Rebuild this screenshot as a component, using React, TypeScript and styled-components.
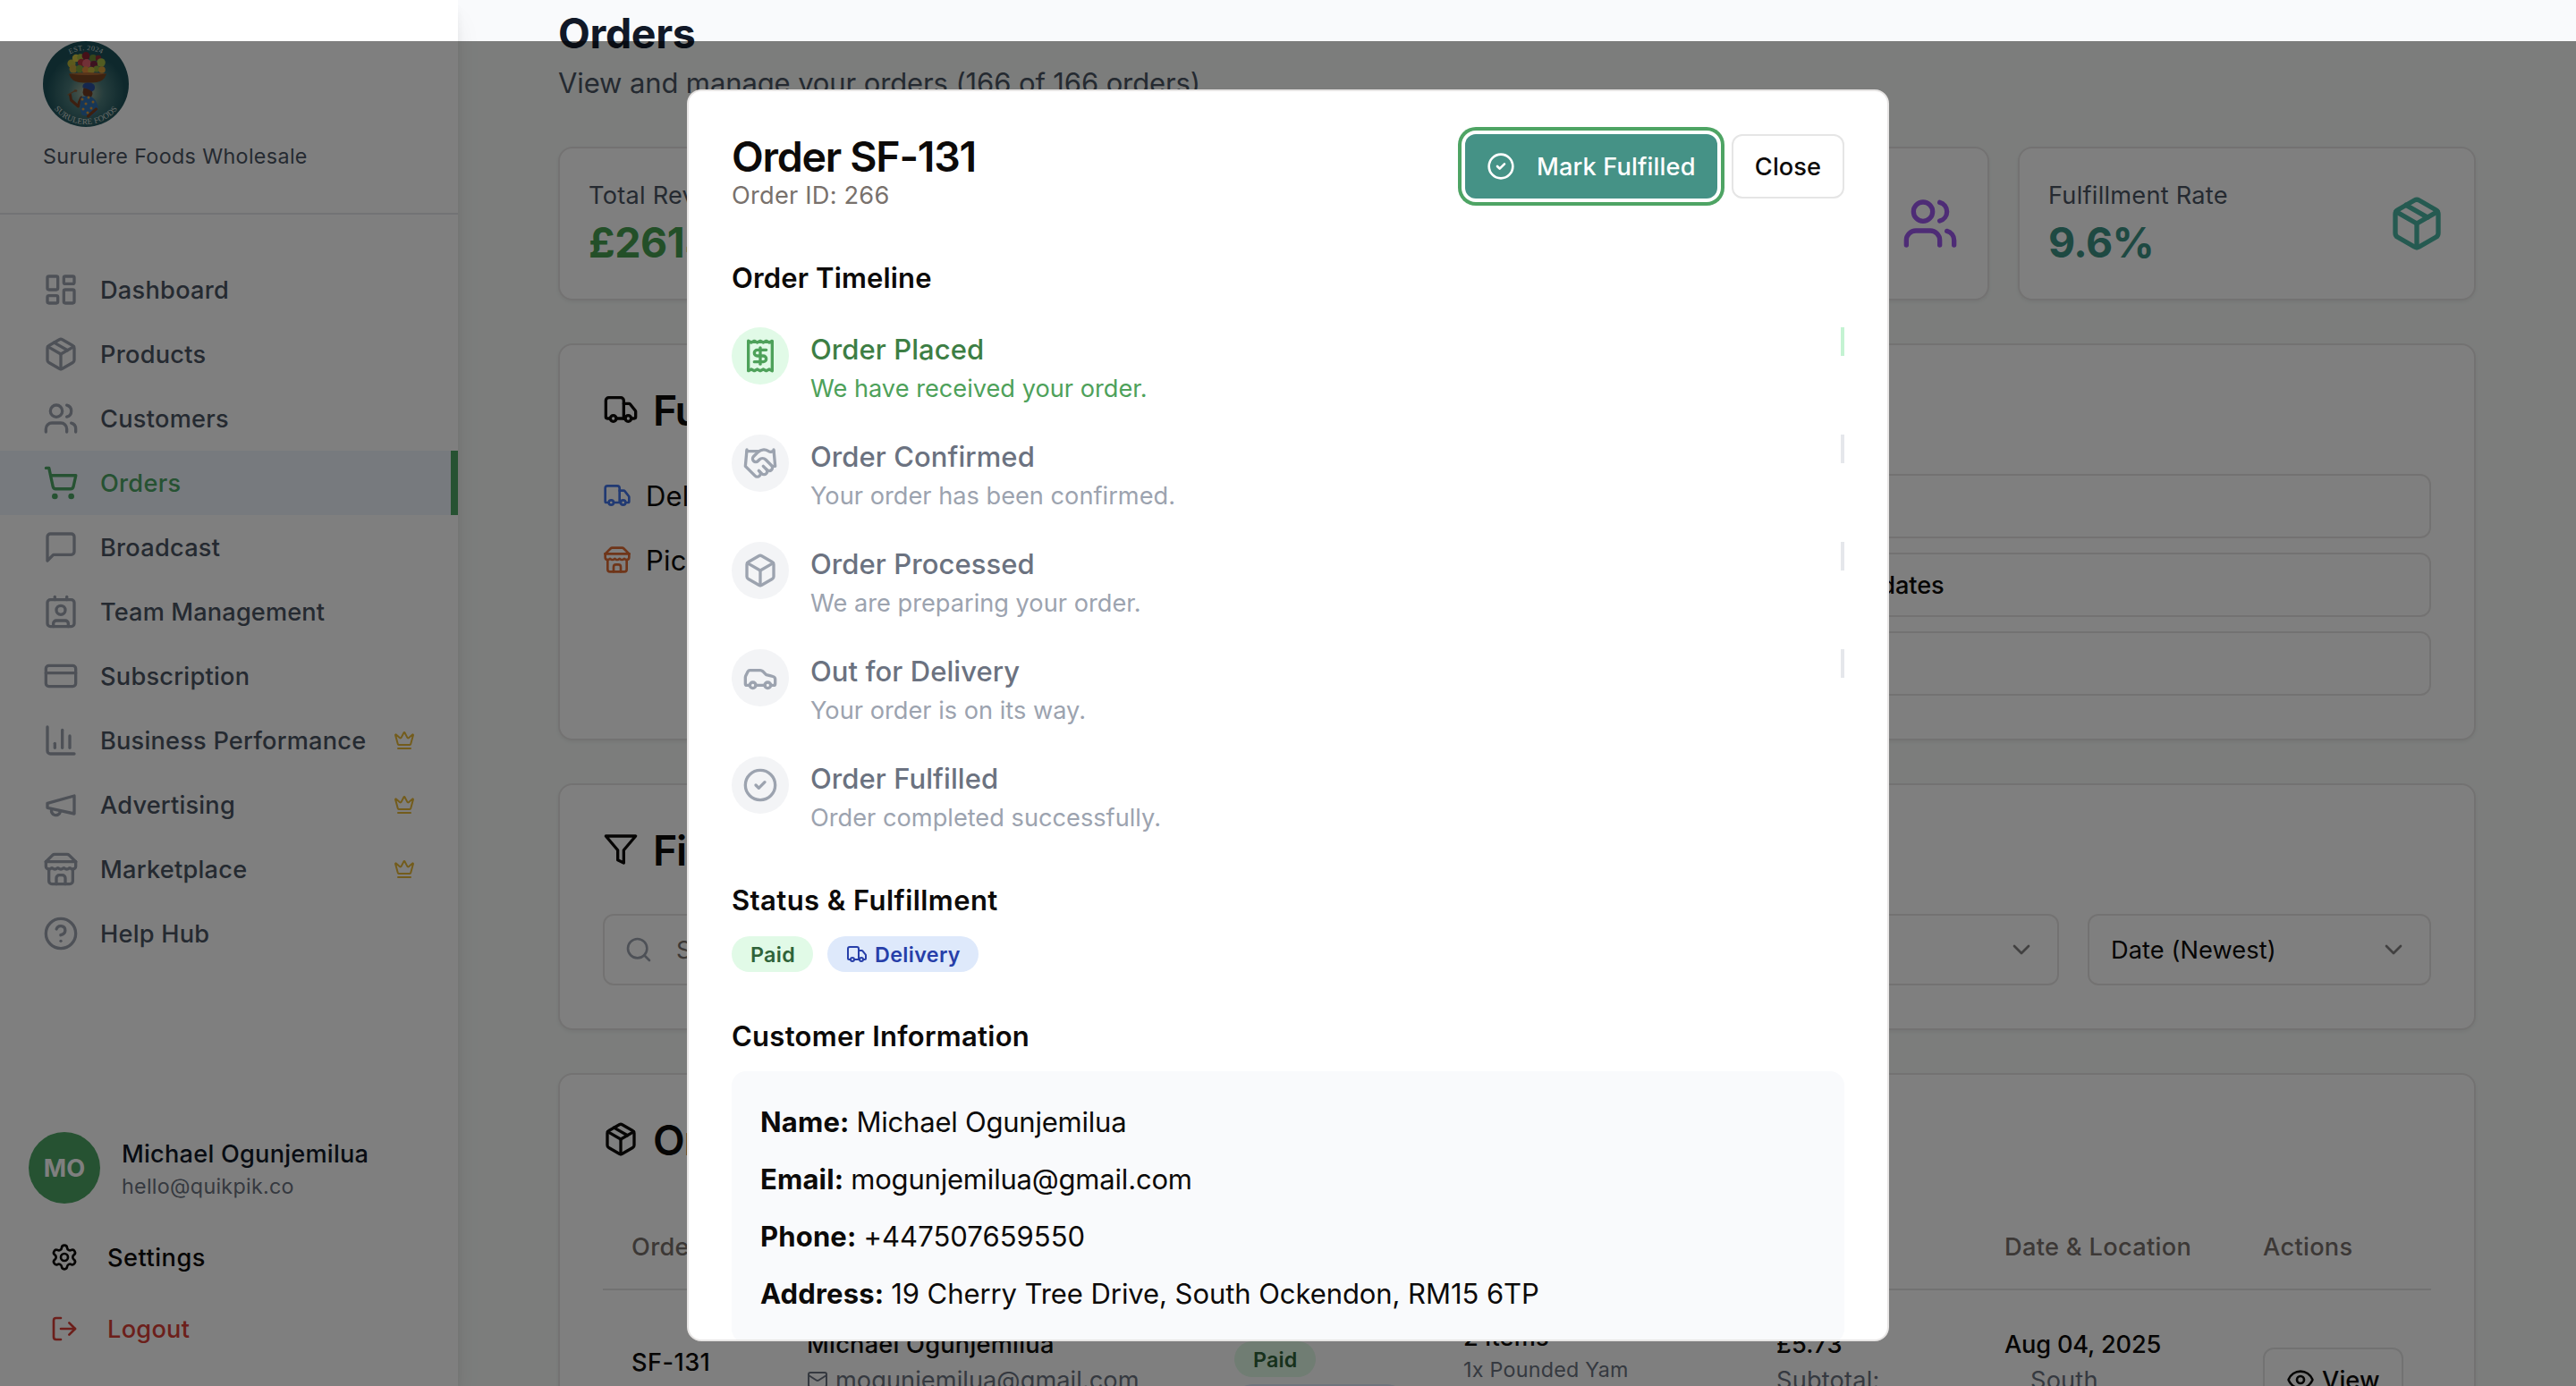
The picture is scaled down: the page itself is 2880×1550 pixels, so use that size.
import React from 'react';
import styled, { createGlobalStyle, css } from 'styled-components';
import {
  Box as BoxIcon, Car, ChartColumn, ChevronDown, CircleCheck, Contact, CreditCard, Crown, Eye,
  Handshake, LayoutDashboard, LogOut, Mail, Package, Receipt, Settings, ShoppingCart, Truck, Users,
} from 'lucide-react';

const GlobalStyle = createGlobalStyle`
  *, *::before, *::after { box-sizing: border-box; }
  html, body { margin: 0; padding: 0; }
  body {
    font-family: Inter, "Liberation Sans", sans-serif;
    color: #0c0a09;
    overflow: hidden;
    -webkit-font-smoothing: antialiased;
  }
  svg { display: block; flex: none; }
  button { font: inherit; color: inherit; }
`;

/* Type scale: optical size and line height for each step. */
const scale = {
  xs: css`font-size: 23.3px; line-height: 32px;`,
  sm: css`font-size: 27.2px; line-height: 40px;`,
  md: css`font-size: 31px; line-height: 48px;`,
  xl: css`font-size: 46.5px; line-height: 64px;`,
};

/* The 1px padding/margin pair seats the baseline without changing the box height. */
const Text = styled.span<{ $size?: keyof typeof scale; $weight?: number; $color?: string; $track?: number }>`
  ${p => scale[p.$size ?? 'sm']}
  font-weight: ${p => p.$weight ?? 400};
  color: ${p => p.$color ?? 'inherit'};
  letter-spacing: calc(${p => p.$track ?? 0.003}em + 0.1px);
  white-space: nowrap;
  display: block;
  padding-top: 1px;
  margin-bottom: -1px;
`;

/* ---------- Icons ---------- */
type IconProps = { size?: number; color?: string };
const Glyph = ({ size = 24, color = 'currentColor', children }: IconProps & { children: React.ReactNode }) => (
  <svg width={size} height={size} viewBox="0 0 24 24" fill="none" stroke={color} strokeWidth={2} strokeLinecap="round" strokeLinejoin="round">
    {children}
  </svg>
);
const MessageIcon = (p: IconProps) => (
  <Glyph {...p}><path d="M21 15a2 2 0 0 1-2 2H7l-4 4V5a2 2 0 0 1 2-2h14a2 2 0 0 1 2 2z" /></Glyph>
);
const MegaphoneIcon = (p: IconProps) => (
  <Glyph {...p}><path d="m3 11 18-5v12L3 14v-3z" /><path d="M11.6 16.8a3 3 0 1 1-5.8-1.6" /></Glyph>
);
const StoreIcon = (p: IconProps) => (
  <Glyph {...p}>
    <path d="m2 7 4.41-4.41A2 2 0 0 1 7.83 2h8.34a2 2 0 0 1 1.42.59L22 7" />
    <path d="M4 12v8a2 2 0 0 0 2 2h12a2 2 0 0 0 2-2v-8" />
    <path d="M15 22v-4a2 2 0 0 0-2-2h-2a2 2 0 0 0-2 2v4" />
    <path d="M2 7h20" />
    <path d="M22 7v3a2 2 0 0 1-2 2a2.7 2.7 0 0 1-1.59-.63.7.7 0 0 0-.82 0A2.7 2.7 0 0 1 16 12a2.7 2.7 0 0 1-1.59-.63.7.7 0 0 0-.82 0A2.7 2.7 0 0 1 12 12a2.7 2.7 0 0 1-1.59-.63.7.7 0 0 0-.82 0A2.7 2.7 0 0 1 8 12a2.7 2.7 0 0 1-1.59-.63.7.7 0 0 0-.82 0A2.7 2.7 0 0 1 4 12a2 2 0 0 1-2-2V7" />
  </Glyph>
);
const HelpIcon = (p: IconProps) => (
  <Glyph {...p}>
    <circle cx="12" cy="12" r="10" /><path d="M9.09 9a3 3 0 0 1 5.83 1c0 2-3 3-3 3" /><path d="M12 17h.01" />
  </Glyph>
);
const FilterIcon = (p: IconProps) => (
  <Glyph {...p}><polygon points="22 3 2 3 10 12.46 10 19 14 21 14 12.46 22 3" /></Glyph>
);
const SearchIcon = (p: IconProps) => (
  <Glyph {...p}><circle cx="11" cy="11" r="8" /><path d="m21 21-4.3-4.3" /></Glyph>
);

const fruits: [number, number, number, string][] = [
  [32, 25, 4.6, '#b9b53a'], [37, 19, 4.2, '#d2c544'], [42, 18, 3.8, '#a9b840'], [34, 31, 4.5, '#c5a23c'],
  [48, 16.5, 4.4, '#8a2030'], [56, 19, 4, '#6c8a35'], [62, 19, 3.2, '#8f2b35'], [65, 24, 4.8, '#a5b844'],
  [43, 24, 4.2, '#b5343e'], [49, 25, 5, '#e0606c'], [57, 26, 4, '#7a2440'], [60, 31, 3.6, '#93a83a'],
  [41, 31, 4.2, '#7fa03a'], [48, 32.5, 4.2, '#e08a3c'], [54, 32.5, 3.8, '#c8b63e'], [66, 32, 3.8, '#d79a3a'],
];
const dots = [[44, 65], [51, 63], [56, 68], [48, 70], [54, 75], [45, 76], [50, 80]];
const BrandMark = () => (
  <svg width="96" height="96" viewBox="0 0 96 96">
    <defs>
      <radialGradient id="glow" cx="50%" cy="60%" r="46%">
        <stop offset="0" stopColor="#a9b49a" /><stop offset=".45" stopColor="#4a7a7a" /><stop offset="1" stopColor="#1c5058" />
      </radialGradient>
      <path id="arcTop" d="M 10 48 A 38 38 0 0 1 86 48" />
      <path id="arcBottom" d="M 3 48 A 45 45 0 0 0 93 48" />
    </defs>
    <circle cx="48" cy="48" r="48" fill="url(#glow)" />
    {fruits.map(([x, y, r, c], i) => <circle key={i} cx={x} cy={y} r={r} fill={c} />)}
    <text fontFamily="Liberation Serif, serif" fontSize="8" fill="#d2d8d2" letterSpacing=".4">
      <textPath href="#arcTop" startOffset="50%" textAnchor="middle">EST. 2024</textPath>
    </text>
    <text fontFamily="Liberation Serif, serif" fontSize="9.2" fill="#d2d8d2" letterSpacing=".1">
      <textPath href="#arcBottom" startOffset="50%" textAnchor="middle">SURULERE FOODS</textPath>
    </text>
    <path d="M29 36.500h42c-2 6-6 8.500-11 9.500q-10 1.500-20 0c-5-1-9-3.500-11-9.500z" fill="#7a4420" />
    <path d="M29 36.500q21-3 42 0-21 3-42 0z" fill="#b06a34" />
    <path d="M43 63q-3 5-3.500 10l-8-7-1-6" fill="none" stroke="#7a3f20" strokeWidth="3" strokeLinecap="round" strokeLinejoin="round" />
    <path d="M28 60l8-4.500" stroke="#8a5a34" strokeWidth="1.400" strokeLinecap="round" />
    <ellipse cx="36.500" cy="55.500" rx="1.800" ry="1.200" fill="#8a5a34" />
    <path d="M45.500 52l9 1.500 1 5.500-2 5-5 .5-1-3-2-1-1-3z" fill="#6e3a22" />
    <path d="M44.500 52q-1-5 5-5.500 8-.5 8.500 4.500.500 4-3.500 5.500-3-3.500-10-4.500z" fill="#2a4f9c" />
    <path d="M42.500 63q6-2.500 12-.5 6 3.500 7 12l-1 4-7 6-10-2q-3.500-9-1-19.500z" fill="#2f6fae" />
    <path d="M59.500 76l-9 8" stroke="#7a3f20" strokeWidth="3.200" strokeLinecap="round" />
    {dots.map(([x, y]) => <circle key={`${x}-${y}`} cx={x} cy={y} r="1.500" fill="#d89a3c" />)}
  </svg>
);

/* ---------- Page shell ---------- */
const Page = styled.div`
  width: 2880px;
  height: 1550px;
  display: flex;
  overflow: hidden;
  position: relative;
  background: linear-gradient(#f9fafc 46px, #f8fbf9 46px);
`;

const Sidebar = styled.aside`
  width: 512px;
  flex: none;
  display: flex;
  flex-direction: column;
  background: #fff;
  box-shadow: 0 20px 30px -6px rgba(0, 0, 0, .1), 0 8px 12px -4px rgba(0, 0, 0, .1);
`;
const Brand = styled.div`
  height: 240px;
  padding: 46px 48px 0;
  display: flex;
  flex-direction: column;
  gap: 16px;
  border-bottom: 2px solid #e5e7eb;
`;
const Nav = styled.nav`
  padding-top: 48px;
  display: flex;
  flex-direction: column;
`;
const NavItem = styled.a<{ $active?: boolean }>`
  height: 72px;
  padding: 0 40px 0 48px;
  display: flex;
  align-items: center;
  gap: 24px;
  color: ${p => (p.$active ? '#4ca464' : '#4b5563')};
  background: ${p => (p.$active ? '#eff5fd' : 'transparent')};
  border-right: 8px solid ${p => (p.$active ? '#4ca464' : 'transparent')};
  > svg:first-child { color: ${p => (p.$active ? '#4ca464' : '#9ca3af')}; }
`;
const Premium = styled.span`
  margin-left: auto;
  color: #e6b838;
`;
const Account = styled.div`
  margin-top: auto;
  padding: 0 32px 28px;
  display: flex;
  flex-direction: column;
  gap: 8px;
`;
const Profile = styled.div`
  display: flex;
  align-items: center;
  gap: 24px;
  margin-bottom: 16px;
`;
const Avatar = styled.div`
  width: 80px;
  height: 80px;
  border-radius: 50%;
  background: #4ca464;
  color: #fff;
  display: grid;
  place-items: center;
`;
const AccountLink = styled.a<{ $color: string }>`
  height: 72px;
  padding: 0 24px;
  display: flex;
  align-items: center;
  gap: 32px;
  color: ${p => p.$color};
`;

const Main = styled.main`
  flex: 1;
  padding: 4px 112px 0;
  display: flex;
  flex-direction: column;
  gap: 48px;
`;
const Heading = styled.header`height: 112px;`;
const Card = styled.section`
  flex: none;
  background: #fff;
  border: 2px solid #e7e5e4;
  border-radius: 16px;
  box-shadow: 0 2px 4px rgba(0, 0, 0, .06);
  padding: 48px;
`;
const StatGrid = styled.div`
  display: grid;
  grid-template-columns: repeat(4, 1fr);
  gap: 32px;
`;
const StatCard = styled(Card)`
  height: 172px;
  padding: 32px;
  display: flex;
  align-items: center;
  justify-content: space-between;
`;
const CardTitle = styled.h2`
  margin: 0 0 48px;
  height: 48px;
  display: flex;
  align-items: center;
  gap: 16px;
`;
const Split = styled.div`
  display: grid;
  grid-template-columns: 1fr 1fr;
  gap: 48px;
`;
const Stack = styled.div<{ $gap: number }>`
  display: flex;
  flex-direction: column;
  gap: ${p => p.$gap}px;
`;
const IconLine = styled.div<{ $gap?: number }>`
  display: flex;
  align-items: center;
  gap: ${p => p.$gap ?? 16}px;
`;
const WideButton = styled.button`
  height: 72px;
  padding: 0 24px;
  display: flex;
  align-items: center;
  background: #fff;
  border: 2px solid #e7e5e4;
  border-radius: 12px;
`;
const FilterGrid = styled.div`
  display: grid;
  grid-template-columns: 796px 1fr 384px 384px;
  gap: 32px;
`;
const Field = styled.div`
  height: 80px;
  padding: 0 24px;
  display: flex;
  align-items: center;
  border: 2px solid #e7e5e4;
  border-radius: 12px;
`;
const SearchField = styled(Field)`
  padding-left: 22px;
`;
const SelectField = styled(Field)`
  justify-content: space-between;
  > svg { opacity: .5; }
`;

const tableColumns = css`
  display: grid;
  grid-template-columns: 196px 478px 256px 350px 255px 289px 220px;
`;
const TableHead = styled.div`
  ${tableColumns}
  height: 97px;
  align-items: center;
  border-bottom: 2px solid #e5e5e5;
  > * { padding-left: 32px; }
`;
const TableRow = styled.div`
  ${tableColumns}
  align-items: start;
`;
const Cell = styled.div<{ $top: number; $gap?: number }>`
  padding: ${p => p.$top}px 0 0 32px;
  display: flex;
  flex-direction: column;
  align-items: flex-start;
  gap: ${p => p.$gap ?? 0}px;
`;
const Indent = styled.div`padding-left: 29px;`;

const Badge = styled.span<{ $tone: 'green' | 'blue'; $min?: number }>`
  height: 40px;
  min-width: ${p => p.$min ?? 91}px;
  padding: 0 20px 0 21px;
  display: inline-flex;
  align-items: center;
  gap: 8px;
  border-radius: 20px;
  background: ${p => (p.$tone === 'green' ? '#e1fae7' : '#dee9fb')};
  color: ${p => (p.$tone === 'green' ? '#2f6339' : '#273fa9')};
`;
const SmallButton = styled.button`
  height: 72px;
  padding: 0 24px;
  display: inline-flex;
  align-items: center;
  gap: 8px;
  background: #fff;
  border: 2px solid #e5e5e5;
  border-radius: 12px;
`;

/* ---------- Dialog ---------- */
const Overlay = styled.div`
  position: absolute;
  inset: 46px 0 0;
  background: rgba(0, 0, 0, .5);
  display: flex;
  justify-content: center;
  align-items: flex-start;
  padding-top: 54px;
`;
const Dialog = styled.div`
  width: 1344px;
  height: 1400px;
  padding: 48px 48px 0;
  overflow: hidden;
  background: #fff;
  border: 2px solid #e7e5e4;
  border-radius: 16px;
  display: flex;
  flex-direction: column;
  gap: 48px;
`;
const DialogHeader = styled.header`
  height: 88px;
  display: flex;
  justify-content: space-between;
`;
const DialogTitle = styled(Text)`
  line-height: 48px;
`;
const Actions = styled.div`
  display: flex;
  align-items: flex-start;
  gap: 16px;
`;
const PrimaryButton = styled.button`
  width: 282px;
  height: 72px;
  padding: 0 24px;
  display: flex;
  align-items: center;
  gap: 24px;
  border: 0;
  border-radius: 12px;
  background: #459286;
  color: #fff;
  box-shadow: 0 0 0 4px #fff, 0 0 0 8px #4ea464;
`;
const CloseButton = styled(SmallButton)`
  width: 126px;
  justify-content: center;
`;
const Timeline = styled.ol`
  list-style: none;
  margin: 32px 0 0;
  padding: 0;
  display: flex;
  flex-direction: column;
  gap: 32px;
`;
const Step = styled.li<{ $done?: boolean }>`
  height: 88px;
  display: flex;
  gap: 24px;
  --title: ${p => (p.$done ? '#3d7e44' : '#6b7280')};
  --desc: ${p => (p.$done ? '#4ea15a' : '#9ca3af')};
  --bubble: ${p => (p.$done ? '#e1fae7' : '#f3f4f6')};
  --bar: ${p => (p.$done ? '#c4f3d2' : '#e5e7eb')};
`;
const Bubble = styled.div`
  width: 64px;
  height: 64px;
  border-radius: 50%;
  display: grid;
  place-items: center;
  background: var(--bubble);
  color: var(--desc);
`;
const StepBar = styled.div`
  width: 4px;
  height: 32px;
  margin-left: auto;
  background: var(--bar);
`;
const SectionTitle = styled(Text)`
  margin-bottom: -1px;
`;
const Badges = styled.div`
  margin-top: 17px;
  height: 40px;
  display: flex;
  gap: 16px;
`;
const InfoBox = styled.div`
  margin-top: 16px;
  height: 304px;
  flex: none;
  padding: 32px;
  border-radius: 16px;
  background: #f9fafc;
  display: flex;
  flex-direction: column;
  gap: 16px;
`;
const InfoLine = styled.div`
  height: 48px;
  display: flex;
  gap: 8px;
`;
const Section = styled.section<{ $height?: number }>`
  flex: none;
  height: ${p => (p.$height ? `${p.$height}px` : 'auto')};
  display: grid;
  grid-template-rows: 48px auto;
  align-content: start;
`;

const nav = [
  { label: 'Dashboard', icon: LayoutDashboard, track: 0.0056 },
  { label: 'Products', icon: Package, track: 0.006 },
  { label: 'Customers', icon: Users, track: 0.006 },
  { label: 'Orders', icon: ShoppingCart, active: true, track: 0.006 },
  { label: 'Broadcast', icon: MessageIcon, track: 0.005 },
  { label: 'Team Management', icon: Contact, track: 0.001 },
  { label: 'Subscription', icon: CreditCard, track: 0.005 },
  { label: 'Business Performance', icon: ChartColumn, premium: true, track: 0.0038 },
  { label: 'Advertising', icon: MegaphoneIcon, premium: true },
  { label: 'Marketplace', icon: StoreIcon, premium: true, track: 0.005 },
  { label: 'Help Hub', icon: HelpIcon, track: 0.005 },
];

const stats = [
  { label: 'Total Revenue', value: '£2614.09', color: '#469f50', icon: CreditCard, track: -0.012 },
  { label: 'Total Orders', value: '166', color: '#4374e6', icon: ShoppingCart },
  { label: 'Customers', value: '42', color: '#9c58ec', icon: Users },
  { label: 'Fulfillment Rate', value: '9.6%', color: '#3c9284', iconColor: '#4bb5a2', icon: Package, track: -0.014 },
];

const steps = [
  { title: 'Order Placed', desc: 'We have received your order.', icon: Receipt, done: true },
  { title: 'Order Confirmed', desc: 'Your order has been confirmed.', icon: Handshake },
  { title: 'Order Processed', desc: 'We are preparing your order.', icon: BoxIcon },
  { title: 'Out for Delivery', desc: 'Your order is on its way.', icon: Car },
  { title: 'Order Fulfilled', desc: 'Order completed successfully.', icon: CircleCheck },
];

const info = [
  { label: 'Name:', value: 'Michael Ogunjemilua', track: -0.0105 },
  { label: 'Email:', value: 'mogunjemilua@gmail.com', track: -0.0095 },
  { label: 'Phone:', value: '+447507659550', track: -0.002 },
  { label: 'Address:', value: '19 Cherry Tree Drive, South Ockendon, RM15 6TP', track: -0.0055 },
];

const muted = '#78716c';
const slate = '#6b7280';

export default function App() {
  return (
    <Page>
      <GlobalStyle />
      <Sidebar>
        <Brand>
          <BrandMark />
          <Text $size="xs" $color="#4b5563" $track={0.0107}>Surulere Foods Wholesale</Text>
        </Brand>
        <Nav>
          {nav.map(({ label, icon: Icon, active, premium, track }) => (
            <NavItem key={label} $active={active}>
              <Icon size={40} />
              <Text $weight={500} $track={track}>{label}</Text>
              {premium && <Premium><Crown size={24} /></Premium>}
            </NavItem>
          ))}
        </Nav>
        <Account>
          <Profile>
            <Avatar><Text $weight={700}>MO</Text></Avatar>
            <div>
              <Text $weight={500} $color="#111827" $track={0.0043}>Michael Ogunjemilua</Text>
              <Text $size="xs" $color={slate} $track={0.008}>hello@quikpik.co</Text>
            </div>
          </Profile>
          <AccountLink $color="#0c0a09"><Settings size={32} /><Text $weight={500} $track={0.0145}>Settings</Text></AccountLink>
          <AccountLink $color="#d93f36"><LogOut size={32} /><Text $weight={500} $track={0.006}>Logout</Text></AccountLink>
        </Account>
      </Sidebar>

      <Main>
        <Heading>
          <Text $size="xl" $weight={700} $color="#111827" $track={-0.01}>Orders</Text>
          <Text $size="md" $color="#4b5563" $track={-0.007}>View and manage your orders (166 of 166 orders)</Text>
        </Heading>

        <StatGrid>
          {stats.map(({ label, value, color, iconColor, icon: Icon, track }) => (
            <StatCard key={label}>
              <div>
                <Text $color="#4b5563" $track={0.0051}>{label}</Text>
                <Text $size="xl" $weight={700} $color={color} $track={track ?? -0.03}>{value}</Text>
              </div>
              <Icon size={64} color={iconColor ?? color} />
            </StatCard>
          ))}
        </StatGrid>

        <Card>
          <CardTitle><Truck size={40} /><Text $size="xl" $weight={600} $track={-0.03}>Fulfillment Info</Text></CardTitle>
          <Split>
            <Stack $gap={24}>
              <IconLine><Truck size={32} color="#4374e6" /><Text $size="md">Delivery</Text></IconLine>
              <IconLine><StoreIcon size={32} color="#de6b32" /><Text $size="md">Pickup</Text></IconLine>
            </Stack>
            <Stack $gap={16}>
              <WideButton><Text $weight={500}>Mark Fulfilled</Text></WideButton>
              <WideButton><Text $weight={500} $track={-0.008}>Send Customer Delivery Updates</Text></WideButton>
              <WideButton><Text $weight={500}>Export Orders</Text></WideButton>
            </Stack>
          </Split>
        </Card>

        <Card>
          <CardTitle><FilterIcon size={40} /><Text $size="xl" $weight={600} $track={-0.03}>Filters</Text></CardTitle>
          <FilterGrid>
            <SearchField><IconLine $gap={26}><SearchIcon size={32} color="#9ca3af" /><Text $color={muted}>Search orders</Text></IconLine></SearchField>
            <SelectField><Text>All Status</Text><ChevronDown size={32} /></SelectField>
            <SelectField><Text>All Types</Text><ChevronDown size={32} /></SelectField>
            <SelectField><Text $track={-0.0005}>Date (Newest)</Text><ChevronDown size={32} /></SelectField>
          </FilterGrid>
        </Card>

        <Card>
          <CardTitle><Package size={40} /><Text $size="xl" $weight={600} $track={-0.03}>Orders</Text></CardTitle>
          <TableHead>
            {['Order', 'Customer', 'Status', 'Items', 'Total', 'Date & Location', 'Actions'].map(h => (
              <Text key={h} $weight={500} $color={muted} $track={0.008}>{h}</Text>
            ))}
          </TableHead>
          <TableRow>
            <Cell $top={60}><Text $weight={500} $track={0.012}>SF-131</Text></Cell>
            <Cell $top={40}>
              <Text $weight={500} $track={0.005}>Michael Ogunjemilua</Text>
              <IconLine $gap={8}><Mail size={24} color={slate} /><Text $color={slate} $track={-0.0016}>mogunjemilua@gmail.com</Text></IconLine>
            </Cell>
            <Cell $top={57} $gap={8}>
              <Badge $tone="green"><Text $size="xs" $weight={600}>Paid</Text></Badge>
              <Badge $tone="blue" $min={191}><Text $size="xs" $weight={600}>Delivery</Text></Badge>
            </Cell>
            <Cell $top={32}>
              <Text $weight={500}>2 items</Text>
              <Text $size="xs" $color={slate} $track={0.0059}>1x Pounded Yam</Text>
            </Cell>
            <Cell $top={40}>
              <Text $weight={500}>£5.73</Text>
              <Text $color={slate}>Subtotal:</Text>
            </Cell>
            <Cell $top={40}>
              <Text $weight={500} $track={-0.0103}>Aug 04, 2025</Text>
              <Indent><Text $color={slate}>South</Text></Indent>
            </Cell>
            <Cell $top={64}>
              <SmallButton><Eye size={32} /><Text $weight={500} $track={0}>View</Text></SmallButton>
            </Cell>
          </TableRow>
        </Card>
      </Main>

      <Overlay>
        <Dialog role="dialog">
          <DialogHeader>
            <div>
              <DialogTitle $size="xl" $weight={600} $track={-0.029}>Order SF-131</DialogTitle>
              <Text $color={muted} $track={0.0044}>Order ID: 266</Text>
            </div>
            <Actions>
              <PrimaryButton><CircleCheck size={32} /><Text $weight={500} $track={0.0014}>Mark Fulfilled</Text></PrimaryButton>
              <CloseButton><Text $weight={500} $track={0}>Close</Text></CloseButton>
            </Actions>
          </DialogHeader>

          <Section $height={648}>
            <SectionTitle $size="md" $weight={600} $track={0.0015}>Order Timeline</SectionTitle>
            <Timeline>
              {steps.map(({ title, desc, icon: Icon, done }, i) => (
                <Step key={title} $done={done}>
                  <Bubble><Icon size={40} /></Bubble>
                  <div>
                    <Text $size="md" $weight={500} $color="var(--title)" $track={-0.001}>{title}</Text>
                    <Text $color="var(--desc)" $track={-0.0035}>{desc}</Text>
                  </div>
                  {i < steps.length - 1 && <StepBar />}
                </Step>
              ))}
            </Timeline>
          </Section>

          <Section $height={104}>
            <SectionTitle $size="md" $weight={600} $track={0.0105}>Status &amp; Fulfillment</SectionTitle>
            <Badges>
              <Badge $tone="green"><Text $size="xs" $weight={600} $track={0.008}>Paid</Text></Badge>
              <Badge $tone="blue" $min={169}><Truck size={24} /><Text $size="xs" $weight={600} $track={0.0107}>Delivery</Text></Badge>
            </Badges>
          </Section>

          <Section>
            <SectionTitle $size="md" $weight={600} $track={0.0055}>Customer Information</SectionTitle>
            <InfoBox>
              {info.map(({ label, value, track }) => (
                <InfoLine key={label}>
                  <Text $size="md" $weight={700} $track={0.002}>{label}</Text>
                  <Text $size="md" $track={track}>{value}</Text>
                </InfoLine>
              ))}
            </InfoBox>
          </Section>
        </Dialog>
      </Overlay>
    </Page>
  );
}
